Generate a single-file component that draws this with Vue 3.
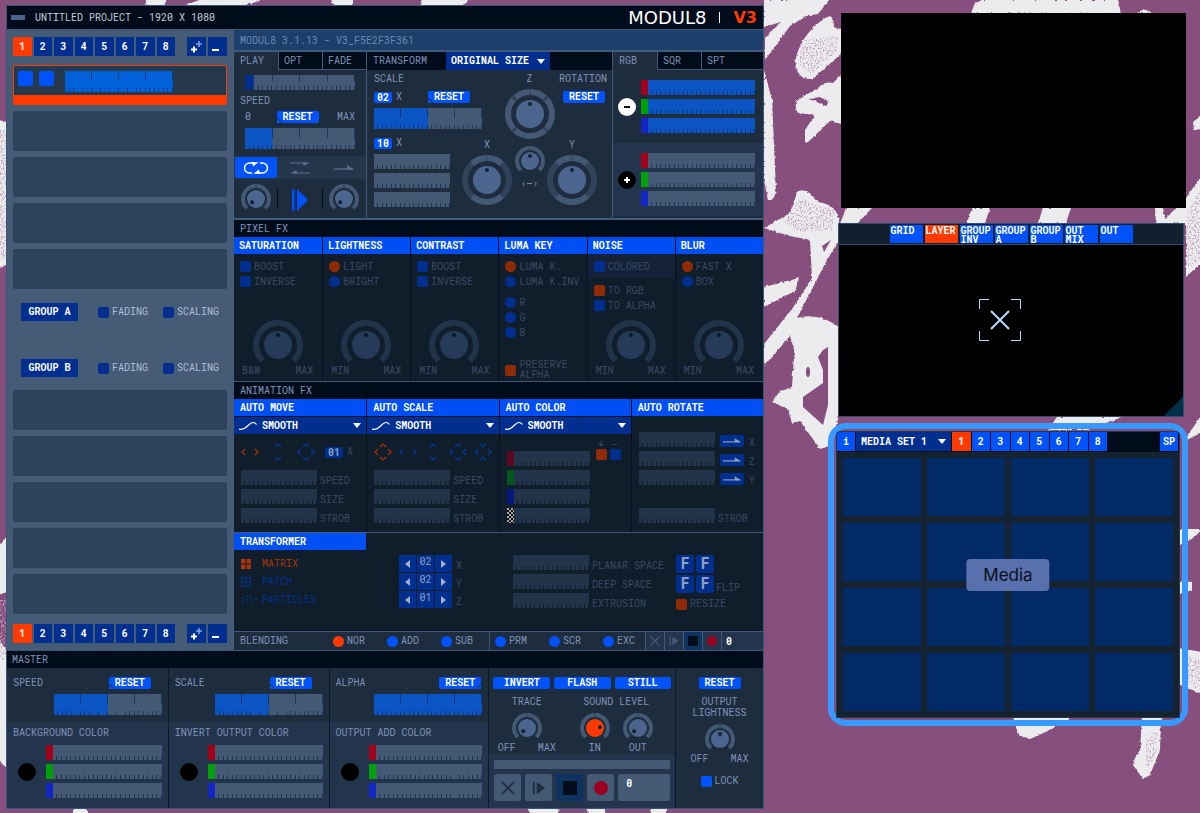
<template>
  <div class="desktop">
    <!-- wallpaper -->
    <svg class="wallpaper" viewBox="0 0 1200 813" preserveAspectRatio="xMidYMid slice" aria-hidden="true">
      <defs>
        <filter id="rough" x="0" y="0" width="100%" height="100%">
          <feTurbulence type="fractalNoise" baseFrequency="0.35" numOctaves="2" seed="4" result="n" />
          <feDisplacementMap in="SourceGraphic" in2="n" scale="3" xChannelSelector="R" yChannelSelector="G" />
        </filter>
        <filter id="grain" x="0" y="0" width="100%" height="100%">
          <feTurbulence type="fractalNoise" baseFrequency="0.6" numOctaves="2" seed="9" />
          <feColorMatrix values="0 0 0 0 0.53  0 0 0 0 0.36  0 0 0 0 0.52  5 0 0 0 -2.500" />
          <feComposite in2="SourceGraphic" operator="in" />
        </filter>
      </defs>
      <g fill="#ececee" filter="url(#rough)">
        <path d="M764 0H829L818 14L806 16L790 26L765 60V38L781 22L764 27Z" />
        <path d="M830 16Q834 18 834 28L842 29V53Q828 66 812 79Q797 80 795 62Q800 35 825 18Z" />
        <path fill-rule="evenodd" d="M842 74L833 83Q825 81 818 88L797 100Q794 108 798 113L815 115L805 130V142H808L830 121L842 124ZM809 99L820 97L829 101L826 106Z" />
        <path d="M764 70L772 100L776 190Q774 202 768 200L764 180Z" />
        <path d="M764 228L790 213L797 192Q806 186 818 202Q836 204 839 220V240L826 262L797 318Q818 312 839 327V416L830 446L820 449L800 421L792 423L788 409L772 402L780 391L792 387L794 357L795 353L790 336L764 366V344L795 305L812 278L810 240L790 236Z" />
        <path d="M764 287L799 278L795 291L764 307Z" />
        <path d="M846 208H872L857 224H840ZM972 208H990L985 223H967ZM1043 208H1071L1066 223H1038ZM1155 208H1163L1165 219L1186 198L1202 175V262L1186 277V223H1156Z" />
        <path d="M971 13L975 3L982 0H1118L1121 14ZM1137 13L1144 9L1154 14Z" />
        <path d="M1202 114L1193 122L1194 130L1202 129ZM1184 440L1202 415V432L1187 440ZM1178 529H1202Q1194 540 1178 546ZM1178 581L1192 582V590L1178 595ZM1178 648L1202 652V694L1178 684Z" />
        <path d="M1057 417H1122L1088 430H1048Z" />
        <path d="M1013 716H1075L1050 730L1030 739L1018 735ZM1142 716H1161L1160 750L1150 775L1143 779L1133 765L1135 758L1140 750Z" />
        <path d="M145 -2H167L164 7H147ZM205 -2H268L240 7H180ZM330 -2H353V7H334ZM422 -2H470L462 7H420Z" />
        <path d="M-2 120L7 122V265L-2 267ZM-2 548L7 536V592L-2 595ZM-2 640L7 650V768L-2 760Z" />
        <path d="M73 806H87V816H73ZM526 806H563L555 816H532ZM586 806H605V816H588ZM651 806H667V816H651Z" />
      </g>
      <g fill="#864f7e">
        <path d="M823 350L828 347L828 405L823 425L803 407L803 397L823 383V370L818 357Z" />
        <path d="M822 246L831 240L824 252Z" />
        <ellipse cx="808" cy="372" rx="2" ry="5" />
      </g>
      <!-- dry brush areas -->
      <g filter="url(#grain)">
        <path d="M800 40L838 36L836 52L812 74L800 66Z" />
        <path d="M784 222L800 198L818 206L836 210L832 230L800 232Z" />
        <path d="M1186 215L1200 190V260L1186 270Z" />
        <path d="M1146 735L1158 730L1156 755L1146 772Z" />
        <path d="M0 130H6V260H0ZM0 600H6V660H0Z" />
        <path d="M1186 655L1200 660V690L1188 684Z" />
      </g>
    </svg>

    <!-- shared icons -->
    <svg class="defs" aria-hidden="true">
      <symbol id="i-loop" viewBox="0 0 26 14">
        <path d="M9 12H6.500a5 5 0 0 1 0-10H12M17 2h2.500a5 5 0 0 1 0 10H14" fill="none" stroke="currentColor" stroke-width="1.500" />
        <path d="M9 1.300h6.500L10 5.500zM17 12.700h-6.500L16 8.500z" fill="currentColor" />
      </symbol>
      <symbol id="i-pingpong" viewBox="0 0 20 14">
        <path d="M0 2h17M3 12h17" stroke="currentColor" stroke-width="1.200" />
        <path d="M13 1.500h6.500l-6 3.500zM7 12.500H.5l6-3.500z" fill="currentColor" />
      </symbol>
      <symbol id="i-once" viewBox="0 0 20 8">
        <path d="M0 5h19" stroke="currentColor" stroke-width="1.300" />
        <path d="M13 1l7 4.500h-7z" fill="currentColor" />
      </symbol>
      <symbol id="i-wave" viewBox="0 0 18 10">
        <path d="M0 8Q4 9.500 8 5.500T14 1.500Q16 1.500 17.500 3.500" fill="none" stroke="currentColor" stroke-width="1.200" />
      </symbol>
      <symbol id="i-caret" viewBox="0 0 8 5"><path d="M0 0h8L4 5z" fill="currentColor" /></symbol>
      <symbol id="i-plus" viewBox="0 0 14 14">
        <path d="M1 9.500h6M4 6.500v6" stroke="#fff" stroke-width="2" />
        <path d="M6 4h6M9 1v6" stroke="#7fa0d8" stroke-width="1.600" />
      </symbol>
      <symbol id="i-minus" viewBox="0 0 14 14"><path d="M1 10h7" stroke="#fff" stroke-width="2" /></symbol>
      <symbol id="i-h" viewBox="0 0 18 18"><path d="M4 6L1 9l3 3M14 6l3 3-3 3" /></symbol>
      <symbol id="i-v" viewBox="0 0 18 18"><path d="M6 4l3-3 3 3M6 14l3 3 3-3" /></symbol>
      <symbol id="i-all" viewBox="0 0 18 18"><path d="M4 6L1 9l3 3M14 6l3 3-3 3M6 4l3-3 3 3M6 14l3 3 3-3" /></symbol>
      <symbol id="i-hin" viewBox="0 0 18 18"><path d="M1 6l3 3-3 3M17 6l-3 3 3 3M6 4l3-3 3 3M6 14l3 3 3-3" /></symbol>
      <symbol id="i-vin" viewBox="0 0 18 18"><path d="M4 6L1 9l3 3M14 6l3 3-3 3M6 1l3 3 3-3M6 17l3-3 3 3" /></symbol>
      <symbol id="i-close" viewBox="0 0 16 16"><path d="M1 1l14 14M15 1L1 15" stroke="currentColor" stroke-width="2" /></symbol>
      <symbol id="i-step" viewBox="0 0 16 16">
        <path d="M1 1h2v14H1zM5.500 1l9.500 7-9.500 7z" fill="currentColor" />
      </symbol>
      <symbol id="i-stop" viewBox="0 0 16 16"><path d="M0 0h16v16H0z" fill="#010c1b" /></symbol>
      <symbol id="i-rec" viewBox="0 0 16 16"><circle cx="8" cy="8" r="8" fill="#9c0020" /></symbol>
      <symbol id="i-matrix" viewBox="0 0 10 10"><path d="M0 0h4.500v4.500H0zM5.500 0H10v4.500H5.500zM0 5.500h4.500V10H0zM5.500 5.500H10V10H5.500z" fill="currentColor" /></symbol>
      <symbol id="i-patch" viewBox="0 0 10 10"><path d="M.5.5h9v9h-9zM5 0v10M0 5h10" fill="none" stroke="currentColor" /></symbol>
      <symbol id="i-particles" viewBox="0 0 16 10">
        <path d="M1 3h2M2 2v2M5 1h2M6 0v2M5 5h2M6 4v2M1 8h2M2 7v2M9 2h2M10 1v2M9 7h2M10 6v2M14 4h2M15 3v2M5 9h2" stroke="currentColor" />
      </symbol>
    </svg>

    <main class="window">
      <header class="titlebar">
        <span class="grip"></span>
        <span class="title">UNTITLED PROJECT - 1920 X 1080</span>
        <span class="logo">MODUL8</span>
        <span class="logo-bar"></span>
        <span class="logo v3">V3</span>
      </header>

      <div class="upper">
        <!-- layers -->
        <aside class="layers">
          <div class="pager">
            <div class="pages">
              <button v-for="n in 8" :key="n" :class="{ active: n === page }" @click="page = n">{{ n }}</button>
            </div>
            <div class="pair">
              <button aria-label="Add layer"><svg><use href="#i-plus" /></svg></button>
              <button aria-label="Remove layer"><svg><use href="#i-minus" /></svg></button>
            </div>
          </div>

          <div class="slots">
            <div class="slot current">
              <button aria-label="Visible"></button>
              <button aria-label="Solo"></button>
              <Slider label="Layer opacity" class="tall" :value="100" />
            </div>
            <div v-for="n in 4" :key="n" class="slot"></div>
          </div>

          <div class="groups">
            <div v-for="g in ['A', 'B']" :key="g" class="group">
              <button>GROUP {{ g }}</button>
              <label class="opt"><input type="checkbox" />FADING</label>
              <label class="opt"><input type="checkbox" />SCALING</label>
            </div>
          </div>

          <div class="slots">
            <div v-for="n in 5" :key="n" class="slot"></div>
          </div>

          <div class="pager bottom">
            <div class="pages">
              <button v-for="n in 8" :key="n" :class="{ active: n === page }" @click="page = n">{{ n }}</button>
            </div>
            <div class="pair">
              <button aria-label="Add layer"><svg><use href="#i-plus" /></svg></button>
              <button aria-label="Remove layer"><svg><use href="#i-minus" /></svg></button>
            </div>
          </div>
        </aside>

        <div class="panel">
          <div class="version">MODUL8 3.1.13 - V3_F5E2F3F361</div>

          <div class="top-row">
            <!-- play -->
            <section class="play">
              <div class="tabs">
                <button class="on">PLAY</button><button>OPT</button><button>FADE</button>
              </div>
              <div class="play-body">
                <Slider label="Position" class="major mark" :value="8" />
                <div class="caption">SPEED</div>
                <div class="speed-line">
                  <span>0</span><button class="reset notch">RESET</button><span>MAX</span>
                </div>
                <Slider label="Play speed" class="tall major" :value="25" />
              </div>
              <div class="modes">
                <button class="on" aria-label="Loop"><svg class="loop"><use href="#i-loop" /></svg></button>
                <button aria-label="Ping pong"><svg class="ping"><use href="#i-pingpong" /></svg></button>
                <button aria-label="Once"><svg class="once"><use href="#i-once" /></svg></button>
              </div>
              <div class="play-knobs">
                <div><Knob label="Scratch" small :angle="-130" /></div>
                <button aria-label="Play">
                  <svg viewBox="0 0 16 22"><path d="M0 0h2v22H0zM5 0l11 11L5 22z" fill="#0052fa" /><path d="M2 0h1v22H2z" fill="#003ab8" /></svg>
                </button>
                <div><Knob label="Audio" small :angle="-130" /></div>
              </div>
            </section>

            <!-- transform -->
            <section class="transform">
              <div class="bar">
                <span>TRANSFORM</span>
                <div class="picker size">
                  <select aria-label="Size"><option>ORIGINAL SIZE</option></select>
                  <svg class="caret"><use href="#i-caret" /></svg>
                </div>
              </div>
              <div class="tf-grid">
                <div class="scale">
                  <div class="caption">SCALE</div>
                  <div class="line">
                    <button class="badge">02</button><span>X</span>
                    <button class="reset notch">RESET</button>
                  </div>
                  <Slider label="Scale" class="tall major" :value="50" />
                </div>
                <div class="axis z"><span>Z</span><Knob label="Rotation Z" ring="full" /></div>
                <div class="rotation"><span>ROTATION</span><button class="reset">RESET</button></div>
                <div class="fine">
                  <div class="line"><button class="badge">10</button><span>X</span></div>
                  <Slider v-for="a in ['X', 'Y', 'Z']" :key="a" :label="'Position ' + a" class="short" :value="0" />
                </div>
                <div class="axis"><span>X</span><Knob label="Rotation X" ring="split" /></div>
                <div class="axis mid"><Knob label="Zoom" small /><span>‹–›</span></div>
                <div class="axis y"><span>Y</span><Knob label="Rotation Y" ring="split" /></div>
              </div>
            </section>

            <!-- colour -->
            <section class="colour">
              <div class="tabs">
                <button class="on">RGB</button><button>SQR</button><button class="last">SPT</button>
              </div>
              <div class="mix">
                <button class="disc minus" aria-label="Subtract"><svg viewBox="0 0 18 18"><path d="M6 9h6" /></svg></button>
                <div class="rgb">
                  <div v-for="c in rgb" :key="c"><i :class="c"></i><Slider :label="'Minus ' + c" :value="100" /></div>
                </div>
              </div>
              <div class="mix add">
                <button class="disc" aria-label="Add"><svg viewBox="0 0 18 18"><path d="M6 9h6M9 6v6" /></svg></button>
                <div class="rgb">
                  <div v-for="c in rgb" :key="c"><i :class="c"></i><Slider :label="'Plus ' + c" :value="0" /></div>
                </div>
              </div>
            </section>
          </div>

          <h2 class="strip">PIXEL FX</h2>
          <div class="fx dim">
            <section v-for="f in pixelFx" :key="f.name">
              <h3>{{ f.name }}</h3>
              <div class="fx-body">
                <div v-for="(set, i) in f.sets" :key="i" class="set" :class="{ tint: f.tint && i === 0 }">
                  <label v-for="(o, j) in set.items" :key="o" class="opt" :class="{ two: o === 'PRESERVE ALPHA' }">
                    <input :type="set.type" :name="f.name + i" :checked="j === set.on" />{{ o }}
                  </label>
                </div>
                <div v-if="f.min" class="dial">
                  <Knob :label="f.name" />
                  <div><span>{{ f.min }}</span><span>MAX</span></div>
                </div>
              </div>
            </section>
          </div>

          <h2 class="strip">ANIMATION FX</h2>
          <div class="anim dim">
            <section v-for="a in motion" :key="a.name">
              <h3>{{ a.name }}</h3>
              <div class="picker wide">
                <svg class="wave"><use href="#i-wave" /></svg>
                <select :aria-label="a.name + ' curve'"><option>SMOOTH</option></select>
                <svg class="caret"><use href="#i-caret" /></svg>
              </div>
              <div class="anim-body">
                <div class="dirs" :class="{ loose: a.times }">
                  <button v-for="(d, i) in a.dirs" :key="d" :class="{ on: i === 0 }" :aria-label="a.name + ' ' + (i + 1)">
                    <svg><use :href="'#i-' + d" /></svg>
                  </button>
                  <div v-if="a.times" class="line"><button class="badge">{{ a.times }}</button><span>X</span></div>
                </div>
                <label v-for="l in ['SPEED', 'SIZE', 'STROB']" :key="l" class="row">
                  <Slider :label="a.name + ' ' + l" class="short" :value="0" />{{ l }}
                </label>
              </div>
            </section>
            <section>
              <h3>AUTO COLOR</h3>
              <div class="picker wide">
                <svg class="wave"><use href="#i-wave" /></svg>
                <select aria-label="Auto color curve"><option>SMOOTH</option></select>
                <svg class="caret"><use href="#i-caret" /></svg>
              </div>
              <div class="anim-body color">
                <div class="rgb">
                  <div v-for="c in [...rgb, 'checker']" :key="c">
                    <i :class="c"></i><Slider :label="'Auto ' + c" class="short" :value="0" />
                  </div>
                </div>
                <div class="sign">
                  <label>+<input type="radio" class="square" name="sign" checked /></label>
                  <label>−<input type="radio" class="square" name="sign" /></label>
                </div>
              </div>
            </section>
            <section>
              <h3>AUTO ROTATE</h3>
              <div class="anim-body">
                <div v-for="a in ['X', 'Z', 'Y']" :key="a" class="row rot">
                  <Slider :label="'Auto rotate ' + a" class="short" :value="0" />
                  <button :aria-label="'Direction ' + a"><svg><use href="#i-once" /></svg></button>{{ a }}
                </div>
                <div class="row"></div>
                <label class="row"><Slider label="Rotate strob" class="short" :value="0" />STROB</label>
              </div>
            </section>
          </div>

          <section class="transformer dim">
            <h3>TRANSFORMER</h3>
            <div class="tr-body">
              <div class="kinds">
                <button v-for="k in ['matrix', 'patch', 'particles']" :key="k" :class="{ on: k === kind }" @click="kind = k">
                  <svg :class="k"><use :href="'#i-' + k" /></svg>{{ k.toUpperCase() }}
                </button>
              </div>
              <div class="steppers">
                <div v-for="s in steps" :key="s.axis">
                  <button aria-label="Less" @click="s.n--"><svg viewBox="0 0 5 8"><path d="M5 0v8L0 4z" /></svg></button>
                  <b>0{{ s.n }}</b>
                  <button aria-label="More" @click="s.n++"><svg viewBox="0 0 5 8"><path d="M0 0v8l5-4z" /></svg></button>
                  <span>{{ s.axis }}</span>
                </div>
              </div>
              <div class="spaces">
                <label v-for="l in ['PLANAR SPACE', 'DEEP SPACE', 'EXTRUSION']" :key="l" class="row">
                  <Slider :label="l" class="short" :value="0" />{{ l }}
                </label>
              </div>
              <div class="flips">
                <div><button>F</button><button>F</button></div>
                <div><button>F</button><button>F</button><span>FLIP</span></div>
                <label class="opt"><input type="checkbox" checked />RESIZE</label>
              </div>
            </div>
          </section>

          <div class="blending">
            <span class="name">BLENDING</span>
            <div class="blend-group">
              <label v-for="b in ['NOR', 'ADD', 'SUB']" :key="b" class="opt"><input type="radio" name="blend" :value="b" v-model="blend" />{{ b }}</label>
            </div>
            <div class="blend-group second">
              <label v-for="b in ['PRM', 'SCR', 'EXC']" :key="b" class="opt"><input type="radio" name="blend" :value="b" v-model="blend" />{{ b }}</label>
            </div>
            <div class="transport mini">
              <button v-for="t in transport" :key="t" :class="t" :aria-label="t"><svg><use :href="'#i-' + t" /></svg></button>
              <input aria-label="Layer clip" value="0" />
            </div>
          </div>
        </div>
      </div>

      <h2 class="strip master-title">MASTER</h2>
      <div class="master">
        <section v-for="m in masters" :key="m.name">
          <div class="m-top">
            <div class="m-line" :class="{ end: m.value === 100 }">
              <span>{{ m.name }}</span>
              <button class="reset" :class="m.value === 100 ? 'notch-right' : 'notch'">RESET</button>
            </div>
            <Slider :label="m.name" class="tall major" :value="m.value" />
          </div>
          <div class="m-color">
            <span>{{ m.color }}</span>
            <div class="mix">
              <button class="disc" :aria-label="m.color"></button>
              <div class="rgb">
                <div v-for="c in rgb" :key="c"><i :class="c"></i><Slider :label="m.color + ' ' + c" :value="0" /></div>
              </div>
            </div>
          </div>
        </section>

        <section>
          <div class="flashes">
            <button>INVERT</button><button>FLASH</button><button>STILL</button>
          </div>
          <div class="levels">
            <div class="trace">
              <span>TRACE</span>
              <Knob label="Trace" small :angle="-130" />
              <div><span>OFF</span><span>MAX</span></div>
            </div>
            <div class="sound">
              <span>SOUND LEVEL</span>
              <div>
                <div class="hot"><Knob label="Sound in" small :angle="80" /><span>IN</span></div>
                <div><Knob label="Sound out" small :angle="-130" /><span>OUT</span></div>
              </div>
            </div>
          </div>
          <div class="recorder">
            <div class="meter"></div>
            <div class="transport">
              <button v-for="t in transport" :key="t" :class="t" :aria-label="t"><svg><use :href="'#i-' + t" /></svg></button>
              <input aria-label="Master clip" value="0" />
            </div>
          </div>
        </section>

        <section class="output">
          <button class="reset">RESET</button>
          <p><span>OUTPUT</span><span>LIGHTNESS</span></p>
          <Knob label="Output lightness" small />
          <div><span>OFF</span><span>MAX</span></div>
          <label class="opt"><input type="checkbox" />LOCK</label>
        </section>
      </div>
    </main>

    <div class="side">
      <section class="screen"></section>

      <section class="preview">
        <nav>
          <button v-for="v in views" :key="v" :class="{ active: v === view }" @click="view = v">{{ v }}</button>
        </nav>
        <div class="stage">
          <svg viewBox="0 0 42 42" fill="none" stroke="#b9ddff">
            <path d="M.5 10V.5H10M32 .5h9.500V10M.5 32v9.500H10M32 41.500h9.500V32" />
            <path d="M12 12l18 18M30 12L12 30" stroke-width="2" />
          </svg>
          <i class="corner"></i>
        </div>
      </section>

      <section class="media-ring">
        <div class="media">
          <div class="media-bar">
            <button aria-label="Info">i</button>
            <div class="picker">
              <select aria-label="Media set"><option>MEDIA SET 1</option></select>
              <svg class="caret"><use href="#i-caret" /></svg>
            </div>
            <div class="banks">
              <button v-for="n in 8" :key="n" :class="{ active: n === bank }" @click="bank = n">{{ n }}</button>
            </div>
            <button class="sp">SP</button>
          </div>
          <div class="cells">
            <button v-for="n in 16" :key="n" :aria-label="'Clip ' + n"></button>
          </div>
          <div class="tip">Media</div>
        </div>
      </section>
    </div>
  </div>
</template>

<script setup>
import { h, ref } from 'vue'

const page = ref(1)
const bank = ref(1)
const kind = ref('matrix')
const blend = ref('NOR')
const view = ref('LAYER')

const rgb = ['red', 'green', 'blue']
const transport = ['close', 'step', 'stop', 'rec']
const views = ['GRID', 'LAYER', 'GROUP INV', 'GROUP A', 'GROUP B', 'OUT MIX', 'OUT']

const boost = [{ type: 'checkbox', items: ['BOOST', 'INVERSE'] }]
const pixelFx = [
  { name: 'SATURATION', min: 'B&W', sets: boost },
  { name: 'LIGHTNESS', min: 'MIN', sets: [{ type: 'radio', on: 0, items: ['LIGHT', 'BRIGHT'] }] },
  { name: 'CONTRAST', min: 'MIN', sets: boost },
  {
    name: 'LUMA KEY',
    sets: [
      { type: 'radio', on: 0, items: ['LUMA K.', 'LUMA K.INV'] },
      { type: 'radio', items: ['R', 'G', 'B'] },
      { type: 'checkbox', on: 0, items: ['PRESERVE ALPHA'] }
    ]
  },
  {
    name: 'NOISE',
    min: 'MIN',
    tint: true,
    sets: [
      { type: 'checkbox', items: ['COLORED'] },
      { type: 'checkbox', on: 0, items: ['TO RGB', 'TO ALPHA'] }
    ]
  },
  { name: 'BLUR', min: 'MIN', sets: [{ type: 'radio', on: 0, items: ['FAST X', 'BOX'] }] }
]

const motion = [
  { name: 'AUTO MOVE', dirs: ['h', 'v', 'all'], times: '01' },
  { name: 'AUTO SCALE', dirs: ['all', 'h', 'v', 'hin', 'vin'] }
]

const steps = ref([
  { axis: 'X', n: 2 },
  { axis: 'Y', n: 2 },
  { axis: 'Z', n: 1 }
])

const masters = [
  { name: 'SPEED', value: 50, color: 'BACKGROUND COLOR' },
  { name: 'SCALE', value: 50, color: 'INVERT OUTPUT COLOR' },
  { name: 'ALPHA', value: 100, color: 'OUTPUT ADD COLOR' }
]

// slider with its filled part drawn by the background
const Slider = (p) =>
  h('input', { type: 'range', class: 'slider', value: p.value, 'aria-label': p.label, style: { '--fill': p.value + '%' } })
Slider.props = ['value', 'label']

// point on a circle, degrees clockwise from the top
const at = (c, r, deg) => {
  const a = (deg * Math.PI) / 180
  return `${(c + r * Math.sin(a)).toFixed(2)} ${(c - r * Math.cos(a)).toFixed(2)}`
}
const arc = (c, r, from, to) => `M${at(c, r, from)}A${r} ${r} 0 ${to - from > 180 ? 1 : 0} 1 ${at(c, r, to)}`

const Knob = (p) => {
  const size = p.small !== undefined ? 30 : 50
  const c = size / 2
  const w = size === 30 ? 4 : 6
  const r = c - w / 2
  const line = (d, stroke, width = w) => h('path', { d, fill: 'none', stroke, 'stroke-width': width })
  const parts = []
  if (p.ring === 'full') {
    parts.push(line(arc(c, r, 0, 180) + arc(c, r, 180, 360), 'var(--ring)'))
    ;[45, 135, 225, 315].forEach((d) => parts.push(line(arc(c, r, d - 4, d + 4), 'var(--ring-low)')))
  } else if (p.ring === 'split') {
    parts.push(line(arc(c, r, 0, 180) + arc(c, r, 180, 360), 'var(--ring-low)'))
    parts.push(line(arc(c, r, -42, 42) + arc(c, r, 138, 222), 'var(--ring)'))
  } else {
    parts.push(line(arc(c, r, -135, 135), 'var(--ring)'))
  }
  parts.push(h('path', { d: `M${c} 0v${w}`, stroke: 'var(--ring-low)' }))
  parts.push(h('circle', { cx: c, cy: c, r: size === 30 ? 9 : 14, fill: 'var(--cap)' }))
  parts.push(
    h('circle', {
      cx: c,
      cy: size === 30 ? 10 : 15,
      r: 2,
      fill: 'var(--dot)',
      transform: `rotate(${p.angle || 0} ${c} ${c})`
    })
  )
  return h(
    'svg',
    { class: 'knob', width: size, height: size, viewBox: `0 0 ${size} ${size}`, role: 'slider', 'aria-label': p.label, 'aria-valuenow': p.angle || 0 },
    parts
  )
}
Knob.props = ['small', 'ring', 'angle', 'label']
</script>

<style>
body {
  margin: 0;
  background: #864f7e;
}
</style>

<style scoped>
.desktop {
  --bg: #1d2d3e;
  --bg-alt: #23354c;
  --black: #010c1b;
  --line: #41597a;
  --label: #8092b8;
  --blue: #0052fa;
  --navy: #002f90;
  --orange: #ff3a00;
  --track: #435974;
  --tick: #22344a;
  --fillc: #0b54c4;
  --ring: #435974;
  --ring-low: #2f435a;
  --cap: #4b658e;
  --dot: #142235;
  --box: #0052fa;
  position: relative;
  display: flex;
  min-height: 100vh;
  box-sizing: border-box;
  overflow: hidden;
  font: 10px/12px "Roboto Mono", "DejaVu Sans Mono", "Liberation Mono", monospace;
  color: var(--label);
}
.desktop * { box-sizing: border-box; }
.wallpaper {
  position: absolute;
  inset: 0;
  width: 100%;
  height: 100%;
}
.defs { position: absolute; width: 0; height: 0; }

button, select, input { font: inherit; margin: 0; }
button {
  padding: 0;
  border: 0;
  color: #fff;
  background: none;
  cursor: pointer;
}
h2, h3, p { margin: 0; font: inherit; }

.dim {
  --bg: #101e2c;
  --label: #3a4964;
  --track: #22344a;
  --tick: #101e2c;
  --ring: #22344a;
  --ring-low: #1b2b40;
  --cap: #263a59;
  --dot: #0b1624;
  --box: #002f90;
  --orange: #8f2c05;
  background: var(--bg);
  color: var(--label);
}

/* window */
.window {
  position: relative;
  flex: 1;
  min-width: 0;
  margin: 5px 0 4px 6px;
  border: 1px solid #35587a;
  background: var(--bg);
  align-self: flex-start;
}
.titlebar {
  display: flex;
  align-items: center;
  height: 24px;
  padding: 0 6px 0 4px;
  background: var(--black);
  border-bottom: 1px solid var(--line);
  color: #c3cbd6;
}
.grip { width: 14px; height: 5px; margin-right: 10px; background: #4b658e; }
.title { flex: 1; }
.logo { font: 18px/22px "DejaVu Sans", sans-serif; color: #fff; }
.logo-bar { width: 1px; height: 11px; margin: 0 13px; background: #fff; }
.logo.v3 { color: var(--orange); font-size: 16px; font-weight: bold; }

.upper { display: grid; grid-template-columns: 227px minmax(0, 1fr); }

/* layers */
.layers {
  display: flex;
  flex-direction: column;
  padding: 7px 7px 6px 6px;
  background: #455b76;
  border-bottom: 1px solid #35587a;
}
.pager { display: flex; justify-content: space-between; gap: 12px; height: 19px; }
.pages, .pair { display: flex; gap: 2px; flex: 1; }
.pair { flex: 0 0 40px; }
.pager button {
  flex: 1;
  background: var(--navy);
  font-weight: bold;
}
.pager .active { background: var(--orange); }
.pager svg { display: block; width: 14px; height: 14px; margin: 2px auto; }
.slots { display: flex; flex-direction: column; gap: 6px; margin-top: 9px; }
.slot { height: 40px; background: #2e435b; border-radius: 2px; }
.current {
  display: flex;
  gap: 6px;
  padding: 5px 4px;
  border: 1px solid var(--orange);
  border-bottom-width: 10px;
  background: #26384c;
}
.current button { width: 15px; height: 15px; border-radius: 2px; background: var(--blue); }
.current .slider { --fillc: #0061d8; width: 108px; margin-left: 5px; }
.groups { display: flex; flex-direction: column; gap: 38px; margin: 14px 8px 4px; }
.group { display: flex; align-items: center; gap: 15px; color: #b1bdd8; }
.group .opt { --box: #002f90; }
.group button { width: 58px; height: 18px; margin-right: 5px; background: var(--navy); font-weight: bold; }
.bottom { margin-top: 10px; }

/* small controls */
.opt { display: flex; align-items: center; gap: 3px; }
.opt input, .square {
  appearance: none;
  flex: none;
  width: 11px;
  height: 11px;
  border-radius: 2px;
  background: var(--box);
}
.opt input[type="radio"] { border-radius: 50%; }
.opt input:checked, .square:checked { background: var(--orange); }

.slider {
  appearance: none;
  display: block;
  width: 100%;
  height: 15px;
  --div: 24;
  --ticks: repeating-linear-gradient(90deg, transparent 0 calc(100% / var(--div) - 1px), var(--tick) 0 calc(100% / var(--div))) bottom / 100% 4px no-repeat;
  background:
    var(--ticks),
    linear-gradient(var(--fillc), var(--fillc)) left / var(--fill) 100% no-repeat,
    var(--track);
}
.slider::-webkit-slider-thumb { appearance: none; width: 1px; height: 1px; opacity: 0; }
.tall { height: 21px; }
.tall {
  background:
    var(--ticks),
    repeating-linear-gradient(90deg, transparent 0 calc(25% - 1px), var(--tick) 0 25%) top / 100% 10px no-repeat,
    linear-gradient(var(--fillc), var(--fillc)) left / var(--fill) 100% no-repeat,
    var(--track);
}
.tall, .colour .slider { --tick: rgba(10, 35, 75, 0.6); }
.mark {
  --fillc: #002f90;
  background:
    var(--ticks),
    repeating-linear-gradient(90deg, transparent 0 calc(25% - 1px), var(--tick) 0 25%) top / 100% 6px no-repeat,
    linear-gradient(var(--fillc), var(--fillc)) left / var(--fill) 100% no-repeat,
    var(--track);
}
.short { width: 76px; flex: none; --div: 17; }
.knob { display: block; flex: none; }

.reset, .flashes button {
  width: 42px;
  height: 12px;
  border-radius: 2px;
  background: var(--blue);
  font-weight: bold;
  line-height: 12px;
}
.notch { border-radius: 2px 2px 2px 0; background: linear-gradient(45deg, var(--blue) 3px, var(--bg) 3px 4px, var(--blue) 4px); }
.notch-right { border-radius: 2px 2px 0 2px; background: linear-gradient(-45deg, var(--blue) 3px, var(--bg) 3px 4px, var(--blue) 4px); }
.badge { width: 18px; height: 11px; border-radius: 2px; background: var(--blue); font-weight: bold; line-height: 11px; }
.dim .badge { background: var(--navy); color: #8ea0bd; }

.picker { position: relative; display: flex; align-items: center; background: var(--navy); color: #fff; }
.picker select {
  appearance: none;
  width: 100%;
  height: 100%;
  padding: 0 0 0 5px;
  border: 0;
  background: none;
  color: #fff;
  font-weight: bold;
  border-radius: 0;
}
.caret { position: absolute; right: 5px; width: 8px; height: 5px; pointer-events: none; }

/* panel */
.panel { background: var(--bg); }
.version {
  height: 22px;
  padding-left: 6px;
  line-height: 21px;
  background: #1c3f6b;
  border-bottom: 2px solid var(--line);
  color: #7088b2;
}
.strip { height: 17px; padding-left: 6px; background: var(--black); color: #8092b8; line-height: 17px; }
.top-row { display: grid; grid-template-columns: 132fr 246fr 151fr; border-bottom: 2px solid var(--line); }
.top-row > section { border-left: 1px solid var(--line); }
.top-row > section:first-child { border-left: 0; }
.tabs { display: flex; height: 18px; }
.tabs button {
  flex: 1;
  padding-left: 5px;
  text-align: left;
  background: var(--black);
  border-left: 1px solid var(--line);
  border-bottom: 1px solid var(--line);
  color: var(--label);
}
.tabs .on { background: none; border-color: transparent; }
.colour .tabs button { flex: 0 0 44px; }
.colour .tabs .last { flex: 1; }
.caption { height: 12px; }

.play-body { padding: 5px 11px 7px; }
.play-body .caption { margin: 5px 0 4px -5px; }
.speed-line { display: flex; justify-content: space-between; margin-bottom: 5px; height: 12px; }
.speed-line .reset { margin-left: 7px; }
.modes { display: flex; height: 23px; background: #24364c; }
.modes button {
  flex: 1;
  display: grid;
  place-items: center;
  margin: 1px;
  color: #56708f;
  border-radius: 2px;
}
.modes .on { background: var(--blue); color: #fff; }
.loop { width: 26px; height: 14px; }
.ping { width: 20px; height: 14px; }
.once { width: 20px; height: 8px; }
.play-knobs { display: flex; align-items: center; height: 39px; }
.play-knobs > * { flex: 1; display: grid; place-items: center; height: 30px; }
.play-knobs button { border: solid var(--black); border-width: 0 1px; height: 20px; }
.play-knobs button svg { width: 16px; height: 22px; }

.bar { display: flex; height: 18px; padding-left: 6px; line-height: 18px; background: var(--black); }
.size { width: 104px; margin-left: 19px; }
.tf-grid {
  display: grid;
  grid-template-columns: 88px 50px 35px 60px;
  grid-template-rows: 64px 78px;
  padding: 3px 0 0 7px;
}
.scale { grid-column: 1 / 3; width: 108px; }
.line { display: flex; align-items: center; gap: 4px; }
.scale .line { height: 12px; margin: 6px 0 5px; }
.line .reset { margin-left: auto; margin-right: 12px; }
.axis { display: flex; flex-direction: column; align-items: center; gap: 4px; padding-top: 2px; }
.z { padding: 0; }
.y { align-items: flex-start; }
.y span { width: 50px; text-align: center; }
.mid { padding-top: 9px; gap: 2px; }
.rotation { display: flex; flex-direction: column; align-items: flex-end; gap: 6px; }
.rotation .reset { margin-right: 2px; }
.fine { display: flex; flex-direction: column; gap: 4px; }
.fine .line { height: 12px; margin-bottom: 1px; }

.mix { display: flex; align-items: center; gap: 5px; padding: 10px 8px 10px 5px; }
.mix.add { background: var(--bg-alt); }
.disc {
  flex: none;
  width: 18px;
  height: 18px;
  border-radius: 50%;
  background: #000;
}
.disc svg { display: block; fill: none; stroke: #fff; stroke-width: 2; }
.minus { background: #fff; }
.minus svg { stroke: #000; }
.rgb { flex: 1; display: flex; flex-direction: column; gap: 4px; }
.rgb > div { display: flex; height: 15px; }
.rgb i { flex: 0 0 7px; }
.red { background: #a30019; }
.green { background: #00a00a; }
.blue { background: #1126c4; }
.dim .red { background: #5c0820; }
.dim .green { background: #00591a; }
.dim .blue { background: #061880; }
.checker { background: repeating-conic-gradient(#111 0 25%, #aaa 0 50%) 0 0 / 4px 4px; }

/* pixel fx */
.fx { display: grid; grid-template-columns: repeat(6, minmax(0, 1fr)); border-bottom: 1px solid #3c587a; }
.anim { display: grid; grid-template-columns: repeat(4, minmax(0, 1fr)); border-bottom: 1px solid #3c587a; }
.fx > section, .anim > section { display: flex; flex-direction: column; border-left: 1px solid #04101f; }
.fx > section:first-child, .anim > section:first-child { border-left: 0; }
h3 { height: 17px; padding-left: 6px; line-height: 17px; background: #004ff5; color: #fff; font-weight: bold; }
.fx h3 { padding-left: 5px; }
.fx-body { display: flex; flex-direction: column; flex: 1; min-height: 126px; }
.set { padding: 5px 0 1px 6px; }
.set .opt { height: 15px; white-space: nowrap; }
.set .two { height: 20px; white-space: normal; line-height: 10px; margin-top: 14px; }
.tint { background: #132238; padding-bottom: 4px; }
.dial { margin-top: auto; padding: 0 9px 4px 8px; }
.dial .knob { margin: 0 auto; }
.dial div { display: flex; justify-content: space-between; margin-top: -5px; }

/* animation fx */
.wide { height: 18px; padding-left: 5px; border-top: 1px solid #04101f; }
.wave { flex: none; width: 18px; height: 10px; }
.anim-body { flex: 1; display: flex; flex-direction: column; justify-content: flex-end; gap: 4px; padding: 0 0 9px 7px; min-height: 98px; }
.dirs { display: flex; align-items: center; gap: 7px; height: 18px; margin-bottom: 5px; }
.loose { gap: 10px; }
.dirs button { color: #0038a0; }
.dirs .on { color: #a83508; }
.dirs svg { display: block; width: 18px; height: 18px; fill: none; stroke: currentColor; stroke-width: 1.2; }
.row { display: flex; gap: 3px; height: 15px; line-height: 21px; }
.rot { gap: 5px; }
.rot button { width: 24px; height: 12px; margin-top: 3px; border-radius: 2px; background: var(--navy); color: #8ea0bd; display: grid; place-items: center; }
.rot svg { width: 18px; height: 8px; }
.color { flex-direction: row; justify-content: flex-start; align-items: flex-end; gap: 6px; }
.color .rgb { flex: none; }
.sign { display: flex; gap: 3px; height: 82px; }
.sign label { display: flex; flex-direction: column; align-items: center; line-height: 8px; }

/* transformer */
.transformer h3 { width: 25%; }
.tr-body { display: grid; grid-template-columns: 158px 114px 163px 1fr; padding: 5px 0 21px 7px; }
.kinds { display: flex; flex-direction: column; }
.kinds button { display: flex; align-items: center; height: 18px; color: #00328f; }
.kinds .on { color: #a83508; }
.kinds svg { width: 10px; height: 10px; margin-right: 11px; }
.kinds .particles { width: 16px; margin-right: 5px; }
.steppers > div { display: flex; gap: 1px; height: 17px; margin-bottom: 1px; color: var(--label); line-height: 22px; }
.steppers b, .steppers button { width: 17px; background: var(--navy); color: #8ea0bd; text-align: center; font-weight: normal; line-height: 14px; }
.steppers button { display: grid; place-items: center; }
.steppers svg { width: 5px; height: 8px; fill: #a3b0c4; }
.steppers span { margin-left: 3px; }
.spaces { display: flex; flex-direction: column; gap: 4px; }
.flips { display: flex; flex-direction: column; gap: 2px; }
.flips > div { display: flex; gap: 2px; height: 18px; line-height: 26px; }
.flips button { width: 18px; background: var(--navy); border-radius: 2px; color: #8ea0bd; font: bold 15px/18px "DejaVu Sans Mono", monospace; }
.flips .opt { margin-top: 3px; }

/* blending */
.blending { display: flex; align-items: center; height: 20px; border: solid var(--line); border-width: 1px 0; background: var(--bg); }
.name { width: 99px; padding-left: 6px; }
.blend-group { display: grid; grid-template-columns: repeat(3, 54px); width: 156px; }
.second { height: 18px; padding-left: 5px; border-left: 1px solid var(--line); align-items: center; }
.transport { display: flex; gap: 4px; }
.transport button { display: grid; place-items: center; width: 27px; height: 27px; border-radius: 2px; background: var(--track); color: #1d2d3e; }
.transport button svg { width: 14px; height: 14px; }
.transport .stop { background: #0f3360; }
.transport input { flex: 1; min-width: 0; padding: 0 0 8px 8px; border: 0; border-radius: 2px; background: var(--track); color: #fff; font-weight: bold; }
.mini { flex: 1; gap: 0; }
.mini button, .mini input { width: 19px; height: 18px; padding: 0 4px; border-left: 1px solid var(--line); border-radius: 0; background: var(--bg-alt); color: #455b76; }
.mini button { flex: none; padding: 0; }
.mini input { color: #fff; }
.mini button svg { width: 10px; height: 10px; }

/* master */
.master-title { padding-left: 5px; }
.master { display: grid; grid-template-columns: minmax(0, 161fr) minmax(0, 161fr) minmax(0, 160fr) minmax(0, 187fr) minmax(0, 88fr); }
.master > section { display: flex; flex-direction: column; border-left: 1px solid #0b1828; }
.master > section:first-child { border-left: 0; }
.m-top { padding: 9px 6px 7px; }
.m-line { display: flex; justify-content: space-between; height: 12px; margin-bottom: 5px; padding-right: 11px; }
.end { padding-right: 1px; }
.m-top .slider { width: 108px; margin-left: auto; }
.m-color { flex: 1; padding: 5px 0 0 6px; background: var(--bg-alt); white-space: nowrap; }
.m-color .mix { padding: 6px 6px 10px 5px; gap: 10px; }
.flashes { display: flex; gap: 4px; padding: 9px 4px 7px; }
.flashes button { flex: 1; }
.levels { display: flex; height: 58px; }
.trace, .sound { display: flex; flex-direction: column; align-items: center; }
.trace { width: 75px; }
.trace > div { display: flex; gap: 22px; }
.sound { width: 104px; }
.sound > div { display: flex; gap: 13px; }
.sound > div > div { display: flex; flex-direction: column; align-items: center; width: 30px; }
.levels .knob { margin: 5px 0 -1px; }
.hot { --cap: var(--orange); }
.recorder { flex: 1; padding: 6px 5px; background: var(--bg-alt); }
.meter { height: 9px; margin-bottom: 5px; background: var(--track); }
.output { align-items: center; padding-top: 9px; }
.output p { display: flex; flex-direction: column; align-items: center; margin: 7px 0 6px; line-height: 11px; }
.output > div { display: flex; gap: 22px; margin-top: -1px; }
.output .opt { margin-top: 10px; }

/* right side */
.side { position: relative; flex: 0 0 360px; margin: 13px 12px 0 64px; }
.screen { height: 195px; margin: 0 2px 15px 13px; background: #000; }
.preview { margin: 0 4px 6px 10px; border: 1px solid #2f4d6c; background: #000; }
.preview nav { display: flex; justify-content: center; gap: 2px; height: 21px; padding: 1px 0; border-bottom: 1px solid #2f4d6c; background: #10202f; }
.preview nav button { width: 33px; padding: 1px 1px; font-weight: bold; line-height: 9px; text-align: left; display: flex; background: var(--blue); }
.preview nav .active, .media-bar .active { background: var(--orange); }
.stage { position: relative; display: grid; place-items: center; height: 171px; padding-bottom: 22px; }
.stage svg { width: 42px; height: 42px; margin-left: -22px; }
.corner { position: absolute; right: 0; bottom: 0; width: 19px; height: 19px; background: linear-gradient(135deg, transparent 50%, #003048 50%); }
.media-ring { border: 6px solid #3899ff; border-radius: 18px; padding: 2px; }
.media { position: relative; border: 1px solid #22384f; border-radius: 4px 4px 0 0; background: #152331; overflow: hidden; }
.media-bar { display: flex; gap: 1px; height: 20px; padding: 0 1px 1px 0; background: var(--black); }
.media-bar button { width: 18px; background: var(--blue); font-weight: bold; }
.media-bar .picker { width: 95px; }
.banks { display: flex; gap: 1px; width: 155px; }
.banks button { flex: 1; }
.media-bar .sp { margin-left: auto; }
.cells { display: grid; grid-template-columns: repeat(4, 1fr); gap: 7px 6px; padding: 6px; }
.cells button { height: 58px; background: #022a66; }
.tip {
  position: absolute;
  left: 50%;
  top: 50%;
  transform: translate(-50%, -50%);
  padding: 5px 17px;
  border-radius: 4px;
  background: #5870ad;
  color: #0a0f1c;
  font: 17px/22px Inter, sans-serif;
}
</style>
